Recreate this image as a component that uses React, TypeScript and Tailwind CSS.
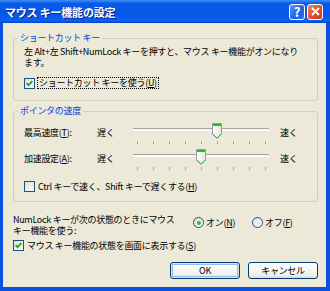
import React from "react"

const Acc = ({ k }: { k: string }): React.ReactElement => (
	<>
		(<span className="underline">{k}</span>)
	</>
)

const CheckBox = ({ checked }: { checked: boolean }): React.ReactElement => (
	<span className="w-[11px] h-[11px] shrink-0 border border-[#1c5180] bg-[linear-gradient(135deg,#dcdcd7,#ffffff)] flex items-center justify-center">
		{checked && (
			<svg width="7" height="7" viewBox="0 0 7 7">
				<path d="M0.6 3.2 L2.6 5.2 L6.4 1.2" stroke="#21a121" strokeWidth="1.7" fill="none" />
			</svg>
		)}
	</span>
)

const Radio = ({ on }: { on: boolean }): React.ReactElement => (
	<span className="w-[11px] h-[11px] shrink-0 rounded-full border border-[#1c5180] bg-[linear-gradient(135deg,#dcdcd7,#ffffff)] flex items-center justify-center">
		{on && <span className="w-[4px] h-[4px] rounded-full bg-[#2fb82f]" />}
	</span>
)

// trackbar: 9 ticks, 16px apart, thumb sits on tick `pos`
const Slider = ({ pos }: { pos: number }): React.ReactElement => {
	const ticks = Array.from({ length: 9 }, (_, i) => 7 + i * 16)
	const x = 7 + pos * 16
	return (
		<svg width="142" height="22" viewBox="0 0 142 22">
			<rect x="3" y="5" width="136" height="3" fill="#f7f6f0" />
			<line x1="3" y1="5.5" x2="139" y2="5.5" stroke="#a6a59f" />
			<line x1="3" y1="7.5" x2="139" y2="7.5" stroke="#ffffff" />
			{ticks.map((t) => (
				<line key={t} x1={t + 0.5} y1="18" x2={t + 0.5} y2="21" stroke="#a5a49c" />
			))}
			<defs>
				<linearGradient id="thumb" x1="0" y1="0" x2="1" y2="0">
					<stop offset="0" stopColor="#ffffff" />
					<stop offset="1" stopColor="#e6e4dc" />
				</linearGradient>
			</defs>
			<path
				d={`M${x - 4.5} 0.5 h9 v10.5 l-4.5 4.5 l-4.5 -4.5 z`}
				fill="url(#thumb)"
				stroke="#8e9cad"
			/>
			<rect x={x - 4} y="1" width="8" height="2" fill="#21c121" />
			<path d={`M${x - 4} 11 l4 4 l4 -4`} stroke="#3cb23c" fill="none" />
		</svg>
	)
}

const Button = ({
	label,
	isDefault
}: {
	label: string
	isDefault?: boolean
}): React.ReactElement => (
	<div
		className={
			isDefault
				? "w-[70px] h-[17px] rounded-[3px] border border-[#003c74] bg-[linear-gradient(#ffffff,#f0f0ea_80%,#dcd8cc)] shadow-[inset_0_0_0_1px_#cee7ff,inset_0_0_0_2px_#98b8ea] flex items-center justify-center leading-[10px]"
				: "w-[70px] h-[17px] rounded-[3px] border border-[#003c74] bg-[linear-gradient(#ffffff,#f0f0ea_80%,#dcd8cc)] flex items-center justify-center leading-[10px]"
		}
	>
		{label}
	</div>
)

export default function App(): React.ReactElement {
	return (
		<div className="w-[330px] h-[291px] flex flex-col bg-[#0a50e0] font-['Noto_Sans_CJK_JP',sans-serif] text-[9px] text-black tracking-[-0.3px]">
			<div className="h-[23px] shrink-0 flex items-center pl-[5px] pr-[7px] bg-[linear-gradient(#3d8ff8,#0a5ae8_15%,#0656e6_60%,#0b61f2_90%,#0342c8)]">
				<span className="text-white font-bold text-[11px] leading-[12px] tracking-[-0.2px] [text-shadow:1px_1px_#0a1f8a]">
					マウス キー機能の設定
				</span>
				<div className="ml-auto flex gap-[2px]">
					<div className="w-[16px] h-[16px] rounded-[3px] border border-white bg-[linear-gradient(135deg,#5c98f8,#1e5fe6_60%,#2d6cec)] flex items-center justify-center text-white font-bold text-[13px] leading-[13px]">
						?
					</div>
					<div className="w-[16px] h-[16px] rounded-[3px] border border-white bg-[linear-gradient(135deg,#f08e6a,#e2502c_50%,#cb3a16)] flex items-center justify-center">
						<svg width="9" height="9" viewBox="0 0 9 9">
							<path d="M1 1 L8 8 M8 1 L1 8" stroke="#ffffff" strokeWidth="1.8" />
						</svg>
					</div>
				</div>
			</div>

			<div className="ml-[3px] mr-[4px] mb-[4px] flex-1 bg-[#ece9d8] flex flex-col pl-[10px] pr-[8px] pt-[10px]">
				<fieldset className="m-0 p-0 min-w-0 border border-[#d0d0bf] rounded-[3px]">
					<legend className="ml-[4px] px-[2px] text-[#0046d5] leading-[10px]">
						ショートカット キー
					</legend>
					<div className="px-[10px] pt-[3px] pb-[11px]">
						<p className="leading-[11px] whitespace-nowrap">
							左 Alt+左 Shift+NumLock キーを押すと、マウス キー機能がオンになり
							<br />
							ます。
						</p>
						<div className="mt-[9px] flex items-center gap-[2px]">
							<CheckBox checked />
							<span className="border border-dotted border-black px-[1px] leading-[10px]">
								ショートカット キーを使う<Acc k="U" />
							</span>
						</div>
					</div>
				</fieldset>

				<fieldset className="mt-[5px] m-0 p-0 min-w-0 border border-[#d0d0bf] rounded-[3px]">
					<legend className="ml-[4px] px-[2px] text-[#0046d5] leading-[10px]">
						ポインタの速度
					</legend>
					<div className="px-[10px] pt-[7px] pb-[9px]">
						<div className="grid grid-cols-[73px_33px_142px_auto] gap-y-[4px] items-start">
							<span className="mt-[4px] leading-[11px]">
								最高速度<Acc k="T" />:
							</span>
							<span className="mt-[4px] leading-[11px]">遅く</span>
							<Slider pos={5} />
							<span className="mt-[4px] pl-[8px] leading-[11px]">速く</span>

							<span className="mt-[4px] leading-[11px]">
								加速設定<Acc k="A" />:
							</span>
							<span className="mt-[4px] leading-[11px]">遅く</span>
							<Slider pos={4} />
							<span className="mt-[4px] pl-[8px] leading-[11px]">速く</span>
						</div>
						<div className="mt-[10px] flex items-center gap-[3px]">
							<CheckBox checked={false} />
							<span className="leading-[11px]">
								Ctrl キーで速く、Shift キーで遅くする<Acc k="H" />
							</span>
						</div>
					</div>
				</fieldset>

				<div className="mt-[12px] flex items-start">
					<p className="w-[180px] shrink-0 leading-[11px] whitespace-nowrap">
						NumLock キーが次の状態のときにマウス
						<br />
						キー機能を使う:
					</p>
					<div className="mt-[3px] w-[59px] flex items-center gap-[2px]">
						<Radio on />
						<span className="leading-[11px]">
							オン<Acc k="N" />
						</span>
					</div>
					<div className="mt-[3px] flex items-center gap-[2px]">
						<Radio on={false} />
						<span className="leading-[11px]">
							オフ<Acc k="F" />
						</span>
					</div>
				</div>

				<div className="mt-[4px] flex items-center gap-[3px]">
					<CheckBox checked />
					<span className="leading-[11px]">
						マウス キー機能の状態を画面に表示する<Acc k="S" />
					</span>
				</div>

				<div className="mt-[11px] flex justify-end gap-[8px]">
					<Button label="OK" isDefault />
					<Button label="キャンセル" />
				</div>
			</div>
		</div>
	)
}
